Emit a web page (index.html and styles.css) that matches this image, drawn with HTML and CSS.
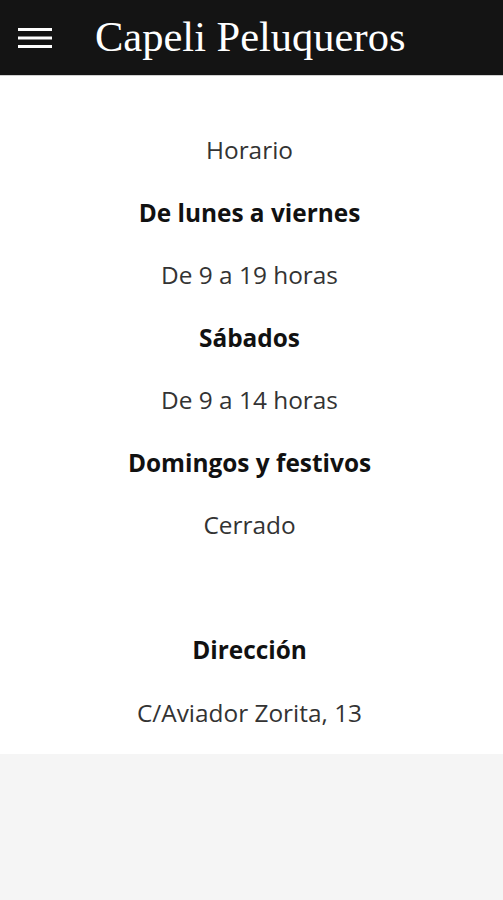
FILE: index.html
```html
<!DOCTYPE html>
<html>

<head>
    <meta charset="UTF-8">
    <title>Capeli Peluqueros</title>
    <link rel="stylesheet" href="styles.css">
</head>

<body>
    <header class="topbar">
        <button class="menu-btn" aria-label="Menú">
            <svg width="34" height="24" viewBox="0 0 34 24">
                <rect x="0" y="2" width="34" height="3" fill="#fff"/>
                <rect x="0" y="10.5" width="34" height="3" fill="#fff"/>
                <rect x="0" y="19" width="34" height="3" fill="#fff"/>
            </svg>
        </button>
        <h1 class="title">Capeli Peluqueros</h1>
    </header>

    <main class="content">
        <p class="line">Horario</p>
        <p class="line bold">De lunes a viernes</p>
        <p class="line">De 9 a 19 horas</p>
        <p class="line bold">Sábados</p>
        <p class="line">De 9 a 14 horas</p>
        <p class="line bold">Domingos y festivos</p>
        <p class="line">Cerrado</p>
        <p class="line spacer"></p>
        <p class="line bold">Dirección</p>
        <p class="line">C/Aviador Zorita, 13</p>
    </main>
</body>

</html>
```

FILE: styles.css
```css
body {
    margin: 0;
    background-color: #f5f5f5;
    font-family: "Open Sans", "Noto Sans", sans-serif;
}

.topbar {
    display: flex;
    align-items: center;
    height: 76px;
    background-color: #141414;
    border-bottom: 1px solid #cfcfcf;
    box-sizing: border-box;
}

.menu-btn {
    background: none;
    border: none;
    padding: 0;
    margin-left: 18px;
    display: flex;
}

.title {
    margin: 0 0 0 43px;
    color: #fff;
    font-family: "Liberation Serif", "DejaVu Serif", serif;
    font-weight: normal;
    font-size: 42.5px;
    padding-bottom: 2px;
}

.content {
    background-color: #fff;
    padding: 43px 4px 10px 0;
    text-align: center;
}

.line {
    margin: 0;
    height: 62.5px;
    line-height: 62.5px;
    font-size: 24.4px;
    color: #333;
}

.bold {
    font-weight: bold;
    color: #111;
}
```
